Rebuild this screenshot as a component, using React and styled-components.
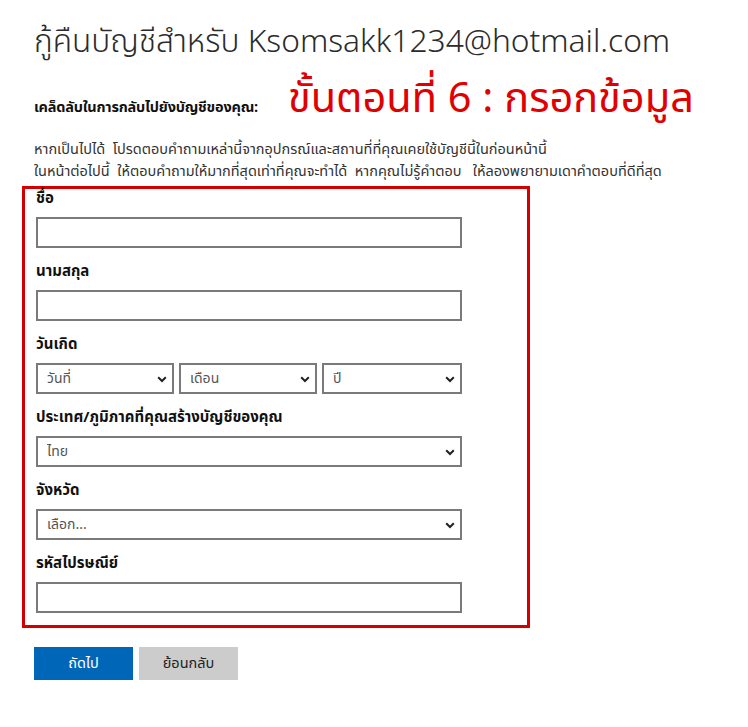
import React from "react";
import styled, { createGlobalStyle } from "styled-components";

const Global = createGlobalStyle`
  html, body { margin: 0; padding: 0; background: #fff; }
  body { font-family: "Segoe UI", "Noto Sans Thai", "Tahoma", "Noto Sans", sans-serif; color: #222; }
  * { box-sizing: border-box; }
`;

const Page = styled.div`
  padding: 17px 0 0 22px;
  width: 748px;
  height: 727px;
`;

const Header = styled.div`
  padding-left: 12px;
`;

const Title = styled.h1`
  margin: 0;
  font-size: 31.7px;
  font-weight: 300;
  line-height: 50px;
  color: #2b2b2b;
  white-space: nowrap;
`;

const StepRow = styled.div`
  display: flex;
  align-items: baseline;
  gap: 30px;
  margin-top: 5px;
  height: 56px;
  white-space: nowrap;
`;

const Tip = styled.span`
  font-size: 14.5px;
  font-weight: 700;
  color: #111;
  letter-spacing: -0.2px;
`;

const Step = styled.span`
  font-size: 41.5px;
  font-weight: 400;
  color: #e10000;
  line-height: 56px;
`;

const Para = styled.p`
  margin: 11px 0 3px;
  font-size: 14.5px;
  line-height: 22px;
  color: #333;
  white-space: pre;
`;

const Box = styled.div`
  width: 508px;
  border: 3px solid #d40000;
  padding: 0 0 12px 11px;
`;

const Field = styled.div`
  margin-bottom: ${(p) => (p.$last ? 0 : 14)}px;
`;

const Label = styled.div`
  font-size: 15px;
  font-weight: 700;
  line-height: 20px;
  margin-bottom: 8px;
  color: #111;
  white-space: nowrap;
`;

const TextInput = styled.input`
  display: block;
  width: 426px;
  height: 31px;
  border: 2px solid #7a7a7a;
  background: #fff;
  font: inherit;
  padding: 0 8px;
  outline: none;
`;

const Row = styled.div`
  display: flex;
  gap: 5px;
  width: 426px;
`;

const SelectWrap = styled.div`
  position: relative;
  width: ${(p) => p.$w}px;
  flex: none;
`;

const Select = styled.select`
  appearance: none;
  -webkit-appearance: none;
  display: block;
  width: 100%;
  height: 31px;
  border: 2px solid #7a7a7a;
  background: #fff;
  font-family: inherit;
  font-size: 14px;
  color: #555;
  padding: 0 26px 0 9px;
  border-radius: 0;
  outline: none;
`;

const Chevron = styled.svg`
  position: absolute;
  right: 7px;
  top: 50%;
  width: 10px;
  height: 7px;
  margin-top: -3px;
  pointer-events: none;
`;

const Buttons = styled.div`
  display: flex;
  gap: 6px;
  margin: 19px 0 0 12px;
`;

const Button = styled.button`
  width: 99px;
  height: 33px;
  border: none;
  font-family: inherit;
  font-size: 14.5px;
  background: ${(p) => (p.$primary ? "#0067b8" : "#cccccc")};
  color: ${(p) => (p.$primary ? "#fff" : "#222")};
  cursor: pointer;
`;

function Arrow() {
  return (
    <Chevron viewBox="0 0 10 7">
      <path d="M1.2 1.3 L5 5 L8.8 1.3" fill="none" stroke="#222" strokeWidth="2" />
    </Chevron>
  );
}

function Dropdown({ w, children }) {
  return (
    <SelectWrap $w={w}>
      <Select defaultValue="a">
        <option value="a">{children}</option>
      </Select>
      <Arrow />
    </SelectWrap>
  );
}

export default function App() {
  return (
    <Page>
      <Global />
      <Header>
        <Title>กู้คืนบัญชีสำหรับ Ksomsakk1234@hotmail.com</Title>
        <StepRow>
          <Tip>เคล็ดลับในการกลับไปยังบัญชีของคุณ:</Tip>
          <Step>ขั้นตอนที่ 6 : กรอกข้อมูล</Step>
        </StepRow>
        <Para>
          {"หากเป็นไปได้  โปรดตอบคำถามเหล่านี้จากอุปกรณ์และสถานที่ที่คุณเคยใช้บัญชีนี้ในก่อนหน้านี้"}
          <br />
          {"ในหน้าต่อไปนี้  ให้ตอบคำถามให้มากที่สุดเท่าที่คุณจะทำได้  หากคุณไม่รู้คำตอบ   ให้ลองพยายามเดาคำตอบที่ดีที่สุด"}
        </Para>
      </Header>
      <Box>
        <Field>
          <Label>ชื่อ</Label>
          <TextInput />
        </Field>
        <Field>
          <Label>นามสกุล</Label>
          <TextInput />
        </Field>
        <Field>
          <Label>วันเกิด</Label>
          <Row>
            <Dropdown w={138}>วันที่</Dropdown>
            <Dropdown w={138}>เดือน</Dropdown>
            <Dropdown w={140}>ปี</Dropdown>
          </Row>
        </Field>
        <Field>
          <Label>ประเทศ/ภูมิภาคที่คุณสร้างบัญชีของคุณ</Label>
          <Dropdown w={426}>ไทย</Dropdown>
        </Field>
        <Field>
          <Label>จังหวัด</Label>
          <Dropdown w={426}>เลือก...</Dropdown>
        </Field>
        <Field $last>
          <Label>รหัสไปรษณีย์</Label>
          <TextInput />
        </Field>
      </Box>
      <Buttons>
        <Button $primary>ถัดไป</Button>
        <Button>ย้อนกลับ</Button>
      </Buttons>
    </Page>
  );
}
